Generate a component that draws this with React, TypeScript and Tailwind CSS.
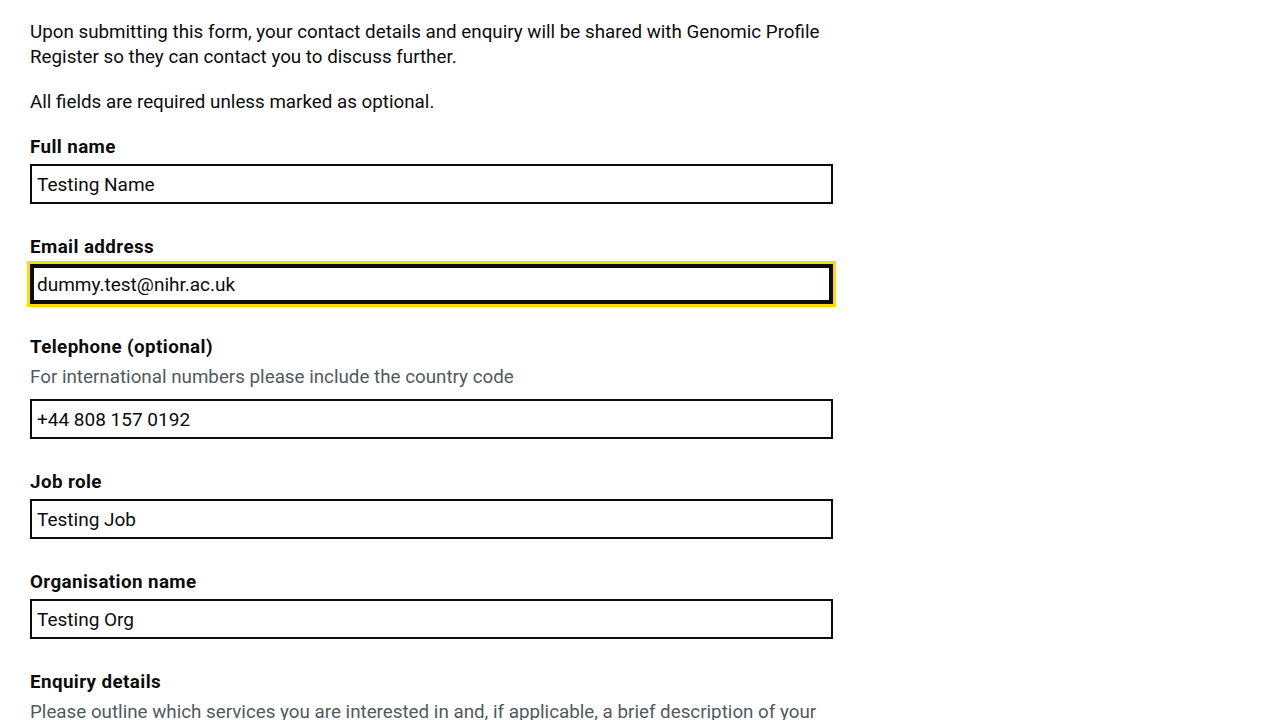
const fields = [
  { id: "fullName", label: "Full name", value: "Testing Name" },
  { id: "email", label: "Email address", value: "dummy.test@nihr.ac.uk", focused: true },
  {
    id: "telephone",
    label: "Telephone (optional)",
    hint: "For international numbers please include the country code",
    value: "+44 808 157 0192",
  },
  { id: "jobRole", label: "Job role", value: "Testing Job" },
  { id: "organisation", label: "Organisation name", value: "Testing Org" },
];

const App = () => {
  return (
    <div className="min-h-screen bg-white font-['Roboto',sans-serif] text-[18.8px] leading-[25px] text-[#0b0c0c]">
      <div className="w-[803px] ml-[30px] pt-[20px]">
        <p className="mb-5">
          Upon submitting this form, your contact details and enquiry will be shared with Genomic
          Profile Register so they can contact you to discuss further.
        </p>
        <p className="mb-[19px]">All fields are required unless marked as optional.</p>
        <form>
          {fields.map(({ id, label, hint, value, focused }) => (
            <div key={id} className="mb-[30px]">
              <label htmlFor={id} className="mb-[4px] block pt-[1px] font-bold tracking-[0.4px]">
                {label}
              </label>
              {hint && <div className="mb-[9px] pt-[1px] text-[#505a5f]">{hint}</div>}
              <input
                id={id}
                type="text"
                defaultValue={value}
                className={
                  focused
                    ? "block h-10 w-full border-2 border-[#0b0c0c] px-[5px] text-[19px] shadow-[inset_0_0_0_2px_#0b0c0c] outline-3 outline-offset-0 outline-[#ffdd00] outline-solid"
                    : "block h-10 w-full border-2 border-[#0b0c0c] px-[5px] text-[19px] outline-none"
                }
              />
            </div>
          ))}
          <div className="mb-[30px]">
            <label htmlFor="enquiry" className="mb-[4px] block pt-[1px] font-bold tracking-[0.4px]">
              Enquiry details
            </label>
            <div className="mb-[9px] pt-[1px] text-[#505a5f]">
              Please outline which services you are interested in and, if applicable, a brief
              description of your research
            </div>
            <textarea
              id="enquiry"
              rows={5}
              className="block w-full border-2 border-[#0b0c0c] px-[5px] text-[19px] outline-none"
            />
          </div>
        </form>
      </div>
    </div>
  );
};

export default App;
